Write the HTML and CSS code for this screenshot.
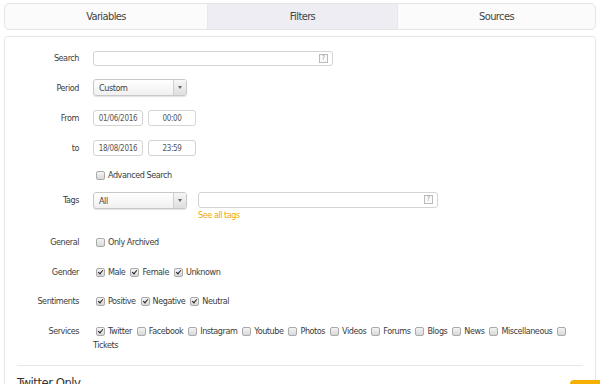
FILE: index.html
```html
<!DOCTYPE html>
<html>
<head>
<meta charset="utf-8">
<title>Filters</title>
<link rel="stylesheet" href="styles.css">
</head>
<body>
	<div class="tabs">
		<div class="tab">Variables</div>
		<div class="tab active">Filters</div>
		<div class="tab">Sources</div>
	</div>

	<div class="panel">
		<div class="row search-row">
			<label class="lbl">Search</label>
			<div class="field search">
				<span class="help">?</span>
			</div>
		</div>

		<div class="row period">
			<label class="lbl">Period</label>
			<div class="select">
				<span class="value">Custom</span>
				<span class="arrow"></span>
			</div>
		</div>

		<div class="row from">
			<label class="lbl">From</label>
			<div class="field date">01/06/2016</div>
			<div class="field time">00:00</div>
		</div>

		<div class="row">
			<label class="lbl">to</label>
			<div class="field date">18/08/2016</div>
			<div class="field time">23:59</div>
		</div>

		<div class="row small advanced">
			<span class="lbl"></span>
			<span class="check"></span><span class="opt">Advanced Search</span>
		</div>

		<div class="row tags">
			<label class="lbl">Tags</label>
			<div class="select">
				<span class="value">All</span>
				<span class="arrow"></span>
			</div>
			<div class="tagbox">
				<div class="field tagsearch">
					<span class="help">?</span>
				</div>
				<a class="seeall">See all tags</a>
			</div>
		</div>

		<div class="row small general">
			<label class="lbl">General</label>
			<div class="list">
				<span class="check"></span><span class="opt">Only Archived</span>
			</div>
		</div>

		<div class="row small gender">
			<label class="lbl">Gender</label>
			<div class="list">
				<span class="check on"></span><span class="opt">Male</span>
				<span class="check on"></span><span class="opt">Female</span>
				<span class="check on"></span><span class="opt">Unknown</span>
			</div>
		</div>

		<div class="row small sentiments">
			<label class="lbl">Sentiments</label>
			<div class="list">
				<span class="check on"></span><span class="opt">Positive</span>
				<span class="check on"></span><span class="opt">Negative</span>
				<span class="check on"></span><span class="opt">Neutral</span>
			</div>
		</div>

		<div class="row services">
			<label class="lbl">Services</label>
			<div class="list">
				<span class="check on"></span><span class="opt">Twitter</span>
				<span class="check"></span><span class="opt">Facebook</span>
				<span class="check"></span><span class="opt">Instagram</span>
				<span class="check"></span><span class="opt">Youtube</span>
				<span class="check"></span><span class="opt">Photos</span>
				<span class="check"></span><span class="opt">Videos</span>
				<span class="check"></span><span class="opt">Forums</span>
				<span class="check"></span><span class="opt">Blogs</span>
				<span class="check"></span><span class="opt">News</span>
				<span class="check"></span><span class="opt">Miscellaneous</span>
				<span class="check"></span><span class="opt">Tickets</span>
			</div>
		</div>

		<hr class="sep">

		<h3 class="subtitle">Twitter Only</h3>
	</div>

	<div class="corner"></div>
</body>
</html>
```

FILE: styles.css
```css
body {
	margin: 0;
	padding: 3px 4px 0 4px;
	font-family: "DejaVu Sans Condensed", "Liberation Sans", sans-serif;
	font-size: 9px;
	letter-spacing: -0.45px;
	color: #3c3c3c;
	background: #fff;
	overflow: hidden;
	height: 381px;
	position: relative;
}

.tabs {
	display: flex;
	height: 25px;
	border: 1px solid #e6e6e6;
	border-radius: 5px;
	overflow: hidden;
	background: #fbfbfb;
}

.tab {
	flex: 1;
	display: flex;
	align-items: center;
	justify-content: center;
	font-size: 11px;
	letter-spacing: -0.6px;
	color: #444;
	border-right: 1px solid #e8e8e8;
}

.tab:first-child {
	flex: 0 0 202px;
}

.tab:last-child {
	border-right: none;
}

.tab.active {
	flex: 0 0 189px;
	background: #ededf3;
}

.panel {
	margin-top: 6px;
	border: 1px solid #e6e6e6;
	border-bottom: none;
	border-radius: 4px 4px 0 0;
	padding: 13px 12px 0 12px;
	height: 360px;
}

.row {
	display: flex;
	align-items: center;
	margin-bottom: 13px;
}

.row.period,
.row.from {
	margin-bottom: 14px;
}

.lbl {
	flex: 0 0 62px;
	text-align: right;
	margin-right: 14px;
	color: #3c3c3c;
}

.field {
	position: relative;
	box-sizing: border-box;
	height: 16px;
	border: 1px solid #d4d4d4;
	border-radius: 3px;
	background: #fff;
	font-size: 8px;
	letter-spacing: -0.3px;
	color: #555;
	display: flex;
	align-items: center;
	justify-content: center;
}

.search {
	width: 240px;
	height: 15px;
	margin-top: 1px;
}

.help {
	position: absolute;
	right: 4px;
	top: 2px;
	width: 7px;
	height: 7px;
	border: 1px solid #bbb;
	font-size: 7px;
	line-height: 7px;
	letter-spacing: 0;
	text-align: center;
	color: #999;
	background: #fafafa;
}

.date {
	width: 50px;
	margin-right: 5px;
}

.time {
	width: 48px;
}

.select {
	box-sizing: border-box;
	width: 94px;
	height: 17px;
	border: 1px solid #c8c8c8;
	border-radius: 3px;
	background: linear-gradient(#fff, #f0f0f0);
	box-shadow: 0 1px 1px rgba(0, 0, 0, 0.12);
	display: flex;
	align-items: center;
}

.select .value {
	flex: 1;
	padding-left: 5px;
	color: #444;
}

.select .arrow {
	width: 12px;
	height: 15px;
	border-left: 1px solid #d0d0d0;
	background: linear-gradient(#f6f6f6, #dedede);
	position: relative;
}

.select .arrow:after {
	content: "";
	position: absolute;
	left: 4px;
	top: 6px;
	border-left: 2px solid transparent;
	border-right: 2px solid transparent;
	border-top: 3px solid #666;
}

.small {
	height: 12px;
}

.list {
	display: flex;
	flex-wrap: wrap;
	align-items: center;
}

.check {
	box-sizing: border-box;
	display: inline-block;
	width: 9px;
	height: 9px;
	border: 1px solid #aaa;
	border-radius: 2px;
	background: linear-gradient(#f4f4f4, #d8d8d8);
	margin: 0 3px 0 3px;
	position: relative;
}

.check.on:after {
	content: "";
	position: absolute;
	left: 2px;
	top: 0px;
	width: 2px;
	height: 4px;
	border: solid #222;
	border-width: 0 1.5px 1.5px 0;
	transform: rotate(40deg);
}

.opt {
	margin-right: 2px;
}

.row.advanced {
	margin-bottom: 11px;
}

.row.tags {
	align-items: flex-start;
	margin-bottom: 16px;
}

.row.tags .lbl {
	line-height: 17px;
}

.tagbox {
	margin-left: 11px;
}

.tagsearch {
	width: 240px;
	height: 16px;
}

.seeall {
	display: block;
	margin-top: 2px;
	color: #f0a800;
}

.general {
	margin-bottom: 18px;
}

.gender {
	margin-bottom: 17px;
}

.sentiments {
	margin-bottom: 17px;
}

.services {
	align-items: flex-start;
	margin-bottom: 13px;
}

.services .lbl {
	line-height: 14px;
}

.services .list {
	width: 482px;
	line-height: 14px;
}

.sep {
	border: none;
	border-top: 1px solid #e8e8e8;
	margin: 0 0 9px 0;
}

.subtitle {
	margin: 0;
	font-size: 13px;
	font-weight: normal;
	letter-spacing: -0.5px;
	color: #333;
}

.corner {
	position: absolute;
	right: 0;
	bottom: 0;
	width: 30px;
	height: 4px;
	background: #f5b000;
	border-radius: 4px 0 0 0;
}
```
